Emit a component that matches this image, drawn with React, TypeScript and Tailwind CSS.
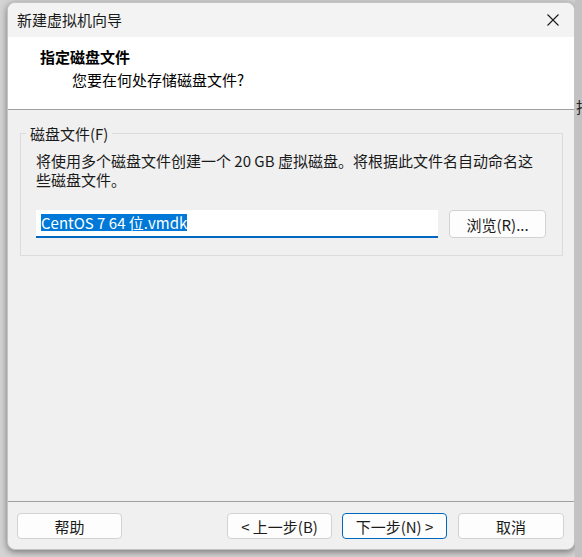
import React from "react";

const font = { fontFamily: '"Noto Sans CJK SC", "Noto Sans", sans-serif' };

function Btn({ children, primary, w }: { children: React.ReactNode; primary?: boolean; w: string }) {
  return (
    <div
      className={`${w} h-[26px] rounded-[4px] border flex items-center justify-center text-[15px] leading-none text-[#1b1b1b] bg-[#fdfdfd] ${
        primary ? "border-[#0067c0]" : "border-[#d2d2d2]"
      }`}
    >
      {children}
    </div>
  );
}

export default function App() {
  return (
    <div className="w-[582px] h-[557px] bg-[#d4d4d4] flex overflow-hidden" style={font}>
      <div className="pl-[7px] pt-[2px]">
        <div className="w-[568px] h-[548px] rounded-[8px] bg-[#f0f0f0] flex flex-col overflow-hidden shadow-[0_2px_7px_rgba(0,0,0,0.45)] border border-[#c4c4c4]">
          {/* title bar */}
          <div className="h-[34px] shrink-0 bg-[#f3f3f3] flex items-center justify-between pl-[9px] pr-[14px]">
            <span className="text-[15px] leading-none text-[#1a1a1a] -mt-[1px]">新建虚拟机向导</span>
            <svg width="12" height="12" viewBox="0 0 12 12" className="mr-[1px]">
              <path d="M0.5 0.5 L11.5 11.5 M11.5 0.5 L0.5 11.5" stroke="#1a1a1a" strokeWidth="1.1" />
            </svg>
          </div>
          {/* header */}
          <div className="h-[73px] shrink-0 bg-white border-b border-[#a0a0a0] pl-[32px] pt-[10px]">
            <div className="text-[15px] leading-[20px] font-bold text-black">指定磁盘文件</div>
            <div className="text-[15px] leading-[20px] text-black pl-[32px] mt-[3px]">您要在何处存储磁盘文件?</div>
          </div>
          {/* body */}
          <div className="flex-1 pl-[12px] pr-[11px] pt-[23px]">
            <div className="relative border border-[#dcdcdc] pl-[15px] pr-[16px] pt-[17px] pb-[17px]">
              <span className="absolute left-[5px] -top-[10px] px-[4px] bg-[#f0f0f0] text-[15px] leading-[20px] text-[#1a1a1a]">
                磁盘文件(F)
              </span>
              <div className="text-[15px] leading-[19px] text-[#1a1a1a]">
                <div className="whitespace-nowrap">将使用多个磁盘文件创建一个 20 GB 虚拟磁盘。将根据此文件名自动命名这</div>
                <div className="whitespace-nowrap">些磁盘文件。</div>
              </div>
              <div className="flex items-center mt-[21px] gap-[11px]">
                <div className="w-[403px] h-[28px] bg-white border-b-2 border-[#0067c0] flex items-center pl-[5px]">
                  <span className="bg-[#0078d7] text-white text-[15px] leading-[17px] -mt-[1px]">CentOS 7 64 位.vmdk</span>
                </div>
                <div className="w-[97px] h-[28px] rounded-[4px] border border-[#d2d2d2] bg-[#fdfdfd] flex items-center justify-center text-[15px] leading-none text-[#1b1b1b]">
                  浏览(R)...
                </div>
              </div>
            </div>
          </div>
          {/* footer */}
          <div className="h-[48px] shrink-0 border-t border-[#a0a0a0] flex items-start pt-[11px] pl-[9px] pr-[10px]">
            <Btn w="w-[105px]">帮助</Btn>
            <div className="flex-1" />
            <div className="flex gap-[10px]">
              <Btn w="w-[105px]">&lt; 上一步(B)</Btn>
              <Btn w="w-[105px]" primary>
                下一步(N) &gt;
              </Btn>
            </div>
            <div className="w-[11px]" />
            <Btn w="w-[106px]">取消</Btn>
          </div>
        </div>
      </div>
      <div className="relative w-[7px] h-full bg-[#c2c2c2] overflow-hidden">
        <span className="absolute left-[1px] top-[98px] text-[15px] leading-[18px] text-[#222]">指</span>
      </div>
    </div>
  );
}
